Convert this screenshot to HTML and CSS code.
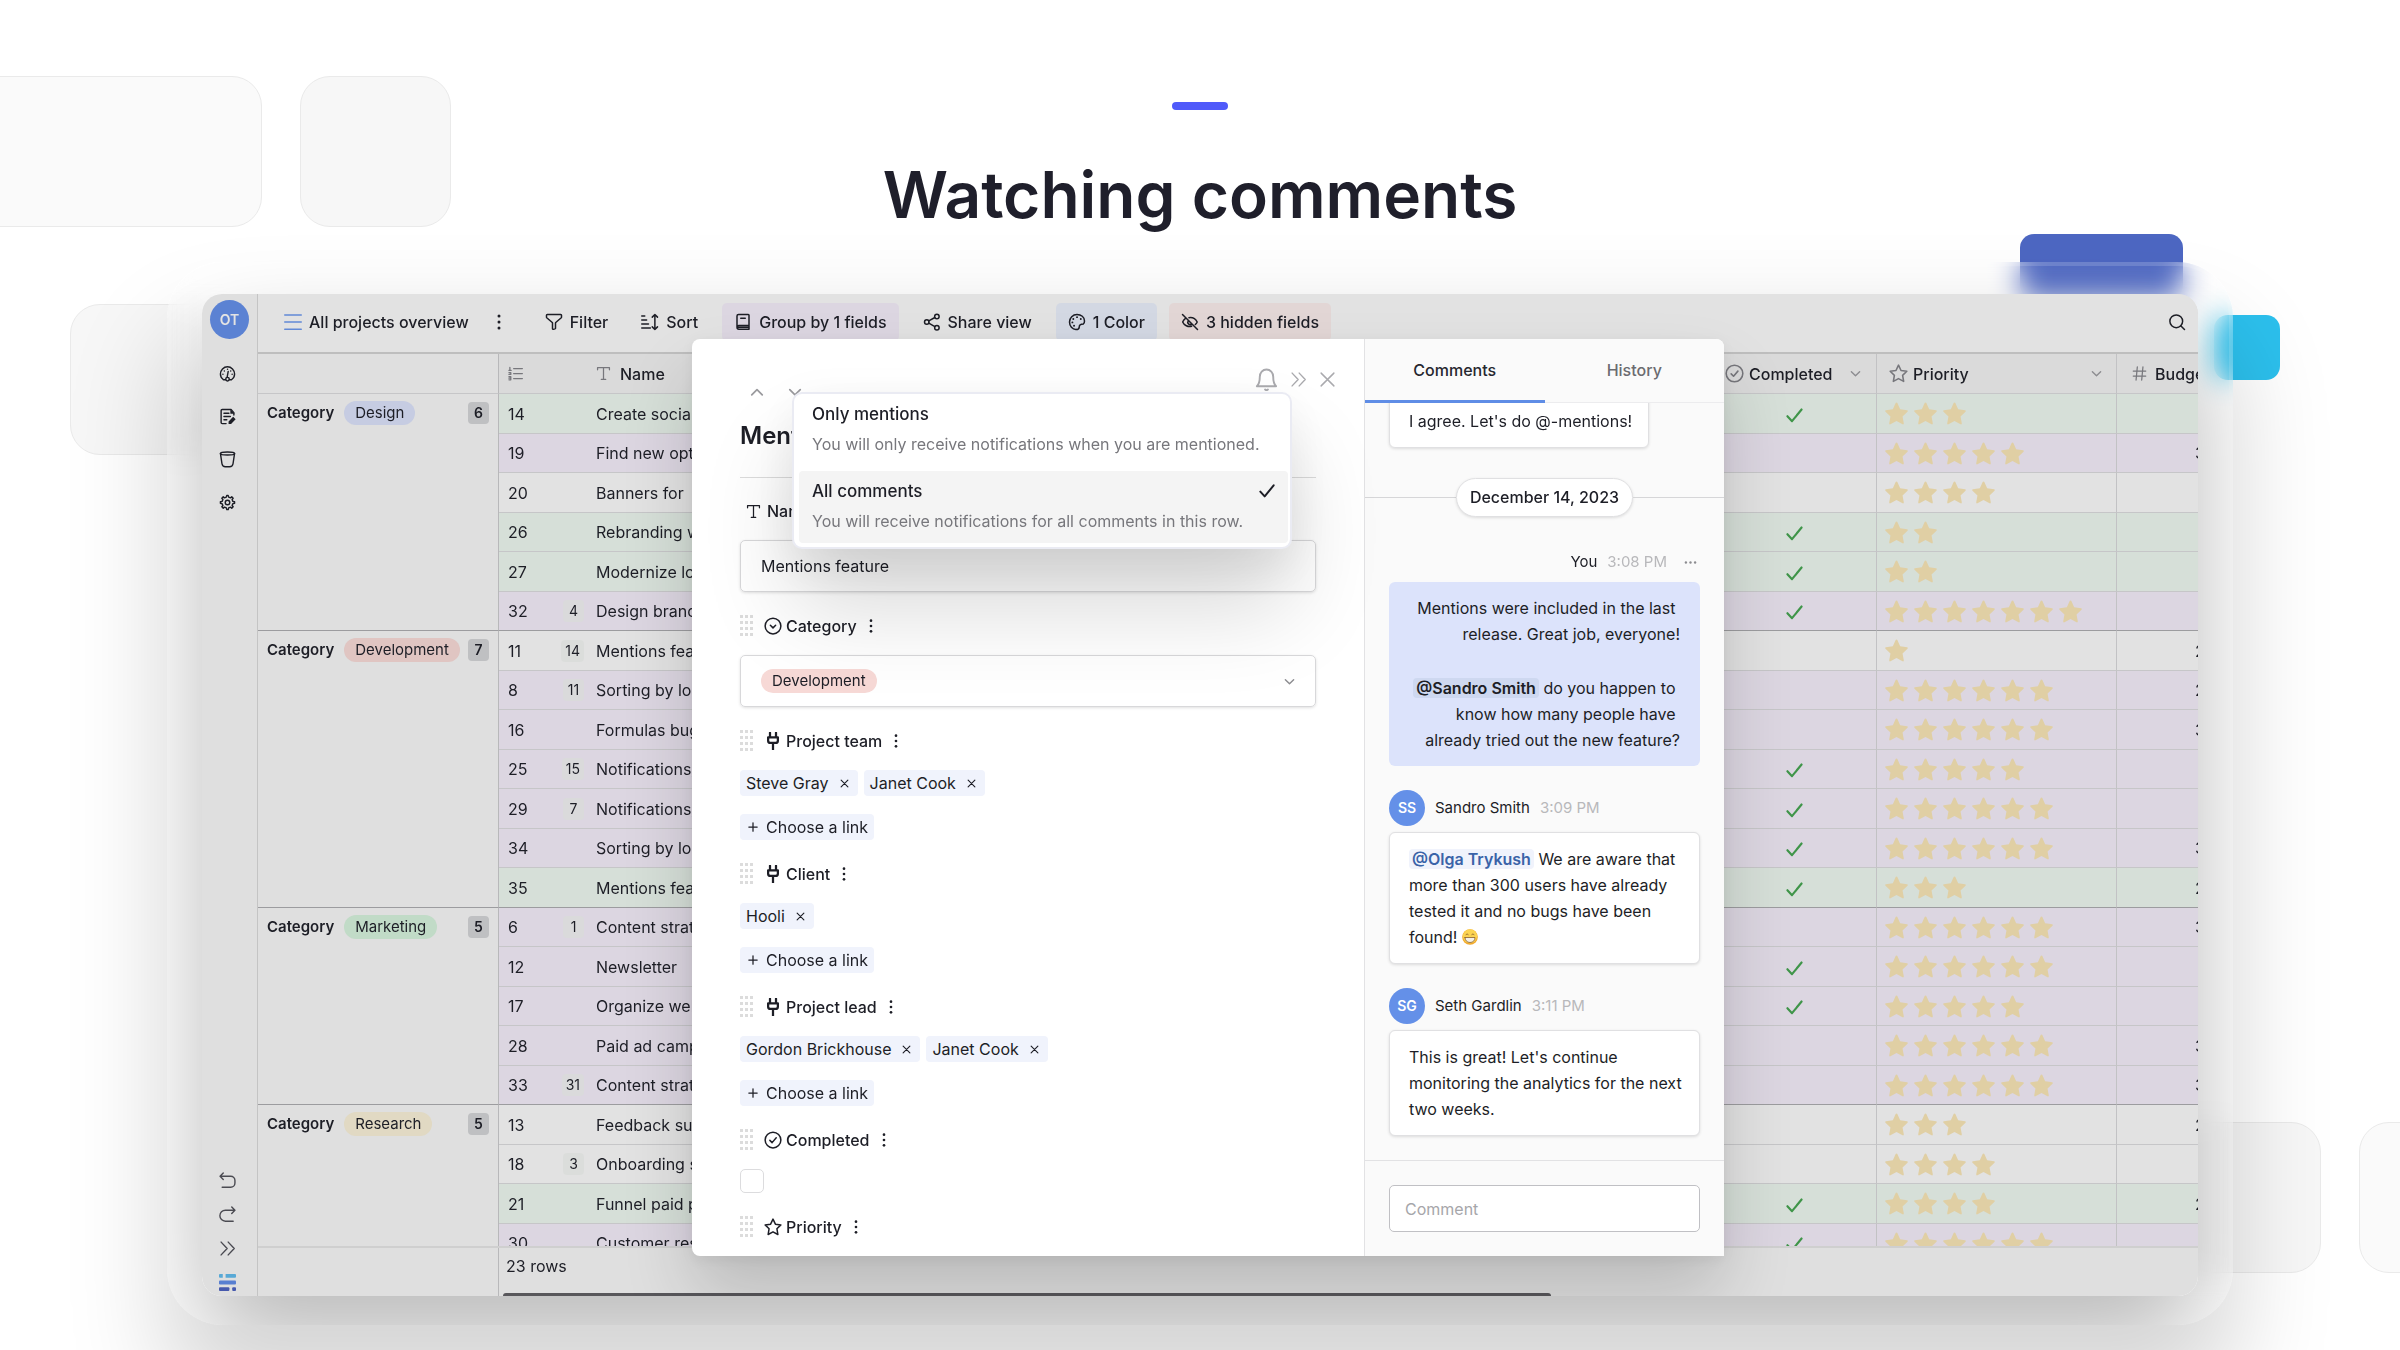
FILE: index.html
```html
<!DOCTYPE html>
<html lang="en">
<head>
	<meta charset="utf-8">
	<title>Watching comments</title>
	<link rel="stylesheet" href="styles.css">
</head>
<body>

<!-- icons -->
<svg class="sprite" aria-hidden="true">
	<symbol id="i-menu" viewBox="0 0 24 24"><path d="M1 2.500h22M1 12h22M1 21.500h22"/></symbol>
	<symbol id="i-kebab" viewBox="0 0 24 24"><g class="solid"><circle cx="12" cy="4" r="2"/><circle cx="12" cy="12" r="2"/><circle cx="12" cy="20" r="2"/></g></symbol>
	<symbol id="i-more" viewBox="0 0 24 24"><g class="solid"><circle cx="3.500" cy="12" r="2.200"/><circle cx="12" cy="12" r="2.200"/><circle cx="20.500" cy="12" r="2.200"/></g></symbol>
	<symbol id="i-filter" viewBox="0 0 24 24"><path d="M3 2h18a1 1 0 0 1 1 1v2.600a1 1 0 0 1-.3.7l-7.400 6.400a1 1 0 0 0-.3.700v6.800a1 1 0 0 1-.7 1l-2.100.6a1 1 0 0 1-1.200-1v-7.400a1 1 0 0 0-.3-.7L2.300 6.300a1 1 0 0 1-.3-.7V3a1 1 0 0 1 1-1z"/></symbol>
	<symbol id="i-sort" viewBox="0 0 24 24"><path d="M1 4h4M1 9.300h6.500M1 14.600h9M1 20h11.500M18.500 2v20M15 5.500 18.500 2 22 5.500M15 18.500l3.500 3.500 3.500-3.500"/></symbol>
	<symbol id="i-book" viewBox="0 0 24 24"><path d="M4 19V4a2 2 0 0 1 2-2h13a1 1 0 0 1 1 1v18.500H6.500a2.500 2.500 0 0 1 0-5H20M9 7h6M4.500 19H20"/></symbol>
	<symbol id="i-share" viewBox="0 0 24 24"><circle cx="18.500" cy="4.500" r="3"/><circle cx="18.500" cy="19.500" r="3"/><circle cx="5" cy="12" r="3"/><path d="M15.800 6 7.700 10.600M7.700 13.500l8.100 4.600"/></symbol>
	<symbol id="i-palette" viewBox="0 0 24 24"><path d="M20.500 14.500c1.200-1 1.500-2.400 1.500-4C22 5.500 17.500 2 12 2S2 6.500 2 12s4 10 8.500 10c3 0 4.500-1.500 4.500-3.500 0-2.500 1-4 5.500-4z"/><path d="M7 8h.1M12 5.500h.1M17 8h.1M5.800 12.500h.1M8 17h.1" stroke-width="2.500"/></symbol>
	<symbol id="i-eye-off" viewBox="0 0 24 24"><path d="M2 2l20 20M10.600 6.200c5-.7 9 1.800 11 5.800-.6 1.300-1.500 2.400-2.500 3.300M6 7.300C4.300 8.500 3 10.200 2.200 12c2 4.500 7 7 12 5.700M9.500 10.500a3.300 3.300 0 0 0 4.500 4.500"/></symbol>
	<symbol id="i-search" viewBox="0 0 24 24"><circle cx="11" cy="11" r="8.500"/><path d="M17 17l5 5"/></symbol>
	<symbol id="i-gauge" viewBox="0 0 24 24"><path d="M6 20.500C3.500 18.800 2 16 2 12.800 2 7.200 6.500 2.500 12 2.500s10 4.700 10 10.300c0 3.200-1.500 6-4 7.700-1.200.7-2.400.3-3.300 0M6 20.500c1.200.7 2.400.3 3.300 0"/><circle cx="12" cy="20" r="2.500"/><path d="M11.500 17l1.500-8M5.500 13h.1M18.500 13h.1M7.500 8.500h.1M16.500 8.500h.1M12 6h.1"/></symbol>
	<symbol id="i-note" viewBox="0 0 24 24"><path d="M21 10V6.500L17 2H4.500A1.500 1.500 0 0 0 3 3.500v17A1.500 1.500 0 0 0 4.500 22H10M7 7.500h7M7 12h9M7 16.500h4"/><path class="solid" d="M13.500 22.500v-3.500l6.500-6.500 3.500 3.500-6.500 6.500zM16 2v6h6z"/></symbol>
	<symbol id="i-bin" viewBox="0 0 24 24"><ellipse cx="12" cy="3.500" rx="10" ry="2.200"/><path d="M2 3.500l2.200 14.500c.4 2.600 2.300 4.300 4.800 4.300h6c2.500 0 4.400-1.700 4.800-4.300L22 3.500"/></symbol>
	<symbol id="i-gear" viewBox="0 0 24 24"><circle cx="12" cy="12" r="3.200"/><path d="M19.600 10.400 18.500 7.700 20 6l-2-2-1.700 1.500-2.700-1.100L12.900 2H11l-.7 2.400-2.600 1.100L6 4 4 6l1.500 1.800-1.100 2.600L2 11v2l2.400.7 1.100 2.600L4 18l2 2 1.800-1.500 2.600 1.100L11 22h2l.6-2.400 2.700-1.100L18 20l2-2-1.500-1.800 1.100-2.600 2.400-.6v-2z"/></symbol>
	<symbol id="i-undo" viewBox="0 0 24 24"><path d="M6 1.500 1.500 6 6 10.500M2 6h14.500a6 6 0 0 1 6 6v3.500a6 6 0 0 1-6 6H4.500"/></symbol>
	<symbol id="i-redo" viewBox="0 0 24 24"><path d="M18 1.500 22.500 6 18 10.500M22 6H9a7.500 7.500 0 0 0 0 15.500h11"/></symbol>
	<symbol id="i-forward" viewBox="0 0 24 24"><path d="M3 3l8.500 9L3 21M13 3l8.500 9-8.500 9"/></symbol>
	<symbol id="i-close" viewBox="0 0 24 24"><path d="M3 3l18 18M21 3 3 21"/></symbol>
	<symbol id="i-up" viewBox="0 0 24 24"><path d="M3 17l9-9 9 9"/></symbol>
	<symbol id="i-down" viewBox="0 0 24 24"><path d="M3 8l9 9 9-9"/></symbol>
	<symbol id="i-bell" viewBox="0 0 24 24"><path d="M19 9c0-4-3-7.500-7-7.500S5 5 5 9c0 7-3 10-3 10h20s-3-3-3-10zM10.500 22.500c.9.700 2.100.7 3 0"/></symbol>
	<symbol id="i-text" viewBox="0 0 24 24"><path d="M2.500 6V2.500h19V6M12 2.500v19M8.500 21.500h7"/></symbol>
	<symbol id="i-ids" viewBox="0 0 24 24"><path d="M9 4h14M9 12h14M9 20h14M3 2v5M1.500 7h3.500M1.500 10.500h3v3h-3M1.500 17h3v5h-3M1.500 19.500h3"/></symbol>
	<symbol id="i-select" viewBox="0 0 24 24"><circle cx="12" cy="12" r="10.500"/><path d="M8.500 11l3.500 3.500 3.500-3.500"/></symbol>
	<symbol id="i-done" viewBox="0 0 24 24"><circle cx="12" cy="12" r="10.500"/><path d="M7.800 12.500l3 3 5.500-6.500"/></symbol>
	<symbol id="i-star" viewBox="0 0 24 24"><path d="M12 1.500l3.200 6.700 7.300 1-5.300 5.100 1.300 7.700L12 18.500 5.500 22l1.300-7.700L1.500 9.200l7.300-1z"/></symbol>
	<symbol id="i-rate" viewBox="0 0 24 24"><path class="solid" d="M12 .5c.4 0 .7.3.9.600l2.900 6.500 7.200.9c.8.100 1.100 1 .5 1.600l-5.200 5 1.300 7.200c.1.800-.6 1.400-1.300 1L12 19.700l-6.300 3.600c-.7.400-1.400-.2-1.300-1l1.300-7.200-5.200-5C-.1 9.500.2 8.600 1 8.500l7.200-.9 2.900-6.500c.2-.3.500-.6.900-.6z"/></symbol>
	<symbol id="i-hash" viewBox="0 0 24 24"><path d="M2 8h20M2 16h20M8.500 1.500l-2 21M17.500 1.500l-2 21"/></symbol>
	<symbol id="i-plug" viewBox="0 0 24 24"><path d="M8 1v6M16 1v6M5.500 7h13v4.500a3 3 0 0 1-3 3h-7a3 3 0 0 1-3-3zM12 14.500V24"/></symbol>
	<symbol id="i-tick" viewBox="0 0 24 24"><path d="M2 13l6.500 7L22 3.500"/></symbol>
	<symbol id="i-plus" viewBox="0 0 24 24"><path d="M12 2v20M2 12h20"/></symbol>
	<symbol id="i-drag" viewBox="0 0 14 22"><path class="solid" d="M0 0h3v3H0zM5 0h3v3H5zM10 0h3v3h-3zM0 6h3v3H0zM5 6h3v3H5zM10 6h3v3h-3zM0 12h3v3H0zM5 12h3v3H5zM10 12h3v3h-3zM0 18h3v3H0zM5 18h3v3H5zM10 18h3v3h-3z"/></symbol>
	<symbol id="i-logo" viewBox="0 0 18 18">
		<g stroke="none"><path fill="#58a9d6" d="M1 0h3v4H1a1 1 0 0 1-1-1V1a1 1 0 0 1 1-1zM7 0h10a1 1 0 0 1 1 1v2a1 1 0 0 1-1 1H7z"/>
		<rect fill="#587fd1" y="7" width="18" height="4" rx="1"/>
		<rect fill="#4659ad" y="14" width="11" height="4" rx="1"/><rect fill="#4659ad" x="14" y="14" width="4" height="4" rx="1"/></g>
	</symbol>
	<symbol id="i-grin" viewBox="0 0 16 16">
		<g stroke="none"><circle cx="8" cy="8" r="7.800" fill="#f2a92c"/><circle cx="8" cy="7.200" r="7" fill="#fcd452"/>
		<path fill="#f4f1ea" d="M3 8.500h10c0 3-2 5-5 5s-5-2-5-5z"/></g>
		<g stroke="#8a5f2c" stroke-width=".8"><path d="M3 8.500h10c0 3-2 5-5 5s-5-2-5-5zM4 5.800c.5-1.300 1.700-1.300 2.200 0M9.800 5.800c.5-1.300 1.700-1.300 2.200 0"/></g>
	</symbol>
</svg>

<!-- background tiles -->
<div class="tile tile-a"></div>
<div class="tile tile-b"></div>
<div class="tile tile-c"></div>
<div class="tile tile-d"></div>
<div class="tile tile-e"></div>
<div class="tile tile-blue"></div>
<div class="tile tile-cyan"></div>

<header class="hero">
	<span class="dash"></span>
	<h1>Watching comments</h1>
</header>

<div class="frame">
	<div class="app">
		<nav class="sidebar">
			<a class="avatar" href="#">OT</a>
			<a class="link" href="#" aria-label="Dashboard"><svg><use href="#i-gauge"/></svg></a>
			<a class="link" href="#" aria-label="Notes"><svg><use href="#i-note"/></svg></a>
			<a class="link" href="#" aria-label="Trash"><svg><use href="#i-bin"/></svg></a>
			<a class="link" href="#" aria-label="Settings"><svg><use href="#i-gear"/></svg></a>
			<div class="bottom">
				<button type="button" aria-label="Undo"><svg><use href="#i-undo"/></svg></button>
				<button type="button" aria-label="Redo"><svg><use href="#i-redo"/></svg></button>
				<button type="button" aria-label="Expand"><svg><use href="#i-forward"/></svg></button>
				<a class="link" href="#" aria-label="Home"><svg><use href="#i-logo"/></svg></a>
			</div>
		</nav>

		<main class="main">
			<div class="toolbar">
				<button type="button" class="view"><svg><use href="#i-menu"/></svg>All projects overview</button>
				<button type="button" class="dots" aria-label="View options"><svg><use href="#i-kebab"/></svg></button>
				<button type="button"><svg><use href="#i-filter"/></svg>Filter</button>
				<button type="button" class="sort"><svg><use href="#i-sort"/></svg>Sort</button>
				<button type="button" class="on purple"><svg><use href="#i-book"/></svg>Group by 1 fields</button>
				<button type="button"><svg><use href="#i-share"/></svg>Share view</button>
				<button type="button" class="on blue"><svg><use href="#i-palette"/></svg>1 Color</button>
				<button type="button" class="on red"><svg><use href="#i-eye-off"/></svg>3 hidden fields</button>
				<button type="button" class="search" aria-label="Search"><svg><use href="#i-search"/></svg></button>
			</div>

			<div class="grid">
				<table>
					<colgroup>
						<col class="c-group"><col class="c-id"><col><col class="c-done"><col class="c-rate"><col class="c-money">
					</colgroup>
					<thead>
						<tr>
							<td class="group"></td>
							<th><div><svg><use href="#i-ids"/></svg></div></th>
							<th class="name"><div><svg><use href="#i-text"/></svg>Name</div></th>
							<th class="done"><div><svg class="big"><use href="#i-done"/></svg>Completed<svg class="arrow"><use href="#i-down"/></svg></div></th>
							<th class="rate"><div><svg class="big"><use href="#i-star"/></svg>Priority<svg class="arrow"><use href="#i-down"/></svg></div></th>
							<th class="money"><div><svg><use href="#i-hash"/></svg>Budget</div></th>
						</tr>
					</thead>
					<tbody id="rows"></tbody>
				</table>
			</div>
			<div class="footer">
				<div class="side"></div>
				<div class="count">23 rows</div>
				<div class="scroll"></div>
			</div>
		</main>

		<div class="overlay">
			<div class="modal" role="dialog" aria-label="Mentions feature">
				<section class="row-form">
					<div class="modal-top">
						<div class="prev-next">
							<button type="button" aria-label="Previous row"><svg><use href="#i-up"/></svg></button>
							<button type="button" aria-label="Next row"><svg><use href="#i-down"/></svg></button>
						</div>
						<div class="actions">
							<button type="button" class="bell" aria-label="Notifications"><svg><use href="#i-bell"/></svg></button>
							<button type="button" aria-label="Collapse"><svg><use href="#i-forward"/></svg></button>
							<button type="button" aria-label="Close"><svg><use href="#i-close"/></svg></button>
						</div>
						<div class="popup">
							<button type="button">
								<strong>Only mentions</strong>
								<span>You will only receive notifications when you are mentioned.</span>
							</button>
							<button type="button" class="active">
								<strong>All comments<svg><use href="#i-tick"/></svg></strong>
								<span>You will receive notifications for all comments in this row.</span>
							</button>
						</div>
					</div>
					<h2>Mentions feature</h2>

					<div class="field">
						<div class="label first"><svg class="small"><use href="#i-text"/></svg><label for="name">Name</label></div>
						<input class="control" id="name" type="text" value="Mentions feature">
					</div>
					<div class="field">
						<div class="label"><svg class="drag"><use href="#i-drag"/></svg><svg><use href="#i-select"/></svg><label for="category">Category</label><svg class="kebab"><use href="#i-kebab"/></svg></div>
						<div class="control">
							<select id="category"><option>Development</option></select>
							<svg class="arrow"><use href="#i-down"/></svg>
						</div>
					</div>
					<div class="field">
						<div class="label"><svg class="drag"><use href="#i-drag"/></svg><svg class="plug"><use href="#i-plug"/></svg>Project team<svg class="kebab"><use href="#i-kebab"/></svg></div>
						<div class="chips">
							<span>Steve Gray<button type="button" aria-label="Remove"><svg><use href="#i-close"/></svg></button></span>
							<span>Janet Cook<button type="button" aria-label="Remove"><svg><use href="#i-close"/></svg></button></span>
						</div>
						<button type="button" class="add"><svg><use href="#i-plus"/></svg>Choose a link</button>
					</div>
					<div class="field">
						<div class="label"><svg class="drag"><use href="#i-drag"/></svg><svg class="plug"><use href="#i-plug"/></svg>Client<svg class="kebab"><use href="#i-kebab"/></svg></div>
						<div class="chips">
							<span>Hooli<button type="button" aria-label="Remove"><svg><use href="#i-close"/></svg></button></span>
						</div>
						<button type="button" class="add"><svg><use href="#i-plus"/></svg>Choose a link</button>
					</div>
					<div class="field">
						<div class="label"><svg class="drag"><use href="#i-drag"/></svg><svg class="plug"><use href="#i-plug"/></svg>Project lead<svg class="kebab"><use href="#i-kebab"/></svg></div>
						<div class="chips">
							<span>Gordon Brickhouse<button type="button" aria-label="Remove"><svg><use href="#i-close"/></svg></button></span>
							<span>Janet Cook<button type="button" aria-label="Remove"><svg><use href="#i-close"/></svg></button></span>
						</div>
						<button type="button" class="add"><svg><use href="#i-plus"/></svg>Choose a link</button>
					</div>
					<div class="field">
						<div class="label"><svg class="drag"><use href="#i-drag"/></svg><svg><use href="#i-done"/></svg><label for="completed">Completed</label><svg class="kebab"><use href="#i-kebab"/></svg></div>
						<input type="checkbox" id="completed">
					</div>
					<div class="field">
						<div class="label"><svg class="drag"><use href="#i-drag"/></svg><svg><use href="#i-star"/></svg>Priority<svg class="kebab"><use href="#i-kebab"/></svg></div>
					</div>
				</section>

				<section class="talk">
					<div class="tabs">
						<button type="button" class="active">Comments</button>
						<button type="button">History</button>
					</div>
					<div class="comments">
						<div class="bubble short">I agree. Let's do @-mentions!</div>
						<div class="date"><span>December 14, 2023</span></div>
						<div class="who mine">You <time>3:08 PM</time><button type="button" aria-label="More"><svg><use href="#i-more"/></svg></button></div>
						<div class="bubble mine">
							<p>Mentions were included in the last release. Great job, everyone!</p>
							<p><b>@Sandro Smith</b> do you happen to know how many people have already tried out the new feature?</p>
						</div>
						<div class="who"><span class="avatar">SS</span>Sandro Smith <time>3:09 PM</time></div>
						<div class="bubble"><b>@Olga Trykush</b> We are aware that more than 300 users have already tested it and no bugs have been found! <svg class="emoji" role="img" aria-label="grin"><use href="#i-grin"/></svg></div>
						<div class="who"><span class="avatar">SG</span>Seth Gardlin <time>3:11 PM</time></div>
						<div class="bubble">This is great! Let's continue monitoring the analytics for the next two weeks.</div>
					</div>
					<div class="write">
						<input type="text" placeholder="Comment" aria-label="Comment">
					</div>
				</section>
			</div>
		</div>
	</div>
</div>

<script type="text/javascript">
	// id, comments, name, color, completed, stars, budget
	var groups = [
		{name: 'Design', count: 6, rows: [
			[14, '', 'Create social', 'green', 1, 3, ''],
			[19, '', 'Find new opt', 'purple', 0, 5, 3],
			[20, '', 'Banners for', '', 0, 4, ''],
			[26, '', 'Rebranding w', 'green', 1, 2, ''],
			[27, '', 'Modernize lo', 'green', 1, 2, ''],
			[32, 4, 'Design brand', 'purple', 1, 7, '']
		]},
		{name: 'Development', count: 7, rows: [
			[11, 14, 'Mentions fea', '', 0, 1, 2],
			[8, 11, 'Sorting by loc', 'purple', 0, 6, 2],
			[16, '', 'Formulas bug', 'purple', 0, 6, 3],
			[25, 15, 'Notifications/', 'purple', 1, 5, ''],
			[29, 7, 'Notifications/', 'purple', 1, 6, ''],
			[34, '', 'Sorting by loc', 'purple', 1, 6, 3],
			[35, '', 'Mentions fea', 'green', 1, 3, 2]
		]},
		{name: 'Marketing', count: 5, rows: [
			[6, 1, 'Content strat', 'purple', 0, 6, 3],
			[12, '', 'Newsletter', 'purple', 1, 6, ''],
			[17, '', 'Organize web', 'purple', 1, 5, ''],
			[28, '', 'Paid ad camp', 'purple', 0, 6, 3],
			[33, 31, 'Content strat', 'purple', 0, 6, 3]
		]},
		{name: 'Research', count: 5, rows: [
			[13, '', 'Feedback sur', '', 0, 3, 2],
			[18, 3, 'Onboarding s', '', 0, 4, ''],
			[21, '', 'Funnel paid p', 'green', 1, 4, 2],
			[30, '', 'Customer res', 'purple', 1, 6, '']
		]}
	];

	function icon(name){
		return '<svg><use href="#i-' + name + '"/></svg>';
	}

	var html = '';
	for (var i=0; i<groups.length; i++) {
		var g = groups[i];
		for (var j=0; j<g.rows.length; j++) {
			var r = g.rows[j];
			html += '<tr class="' + r[3] + (j===g.rows.length-1 ? ' last' : '') + '">';
			if (j===0) {
				html += '<td class="group" rowspan="' + g.rows.length + '"><div><b>Category</b>' +
					'<span class="pill ' + g.name.toLowerCase() + '">' + g.name + '</span><em>' + g.count + '</em></div></td>';
			}
			html += '<td class="id"><div>' + r[0] + (r[1]==='' ? '' : '<i>' + r[1] + '</i>') + '</div></td>' +
				'<td class="name">' + r[2] + '</td>' +
				'<td class="done">' + (r[4] ? icon('tick') : '') + '</td>' +
				'<td class="rate"><div>' + new Array(r[5]+1).join(icon('rate')) + '</div></td>' +
				'<td class="money">' + r[6] + '</td></tr>';
		}
	}
	document.querySelector('#rows').innerHTML = html;
</script>
</body>
</html>
```
FILE: styles.css
```css
*{
	box-sizing: border-box;
}
body, h1, h2, p{
	margin: 0;
}
body{
	position: relative;
	display: flex;
	flex-direction: column;
	height: 100vh;
	padding-bottom: 25px;
	overflow: hidden;
	background: #fff;
	color: #1d1e26;
	font: 16px/20px Inter, sans-serif;
}
button, input, select{
	margin: 0;
	padding: 0;
	border: none;
	outline: none;
	background: none;
	color: inherit;
	font: inherit;
}
a{
	color: inherit;
	text-decoration: none;
}
svg{
	flex: none;
	width: 18px;
	height: 18px;
	fill: none;
	stroke: currentColor;
	stroke-width: 2;
	stroke-linecap: round;
	stroke-linejoin: round;
}
.solid{
	fill: currentColor;
	stroke: none;
}
.sprite{
	position: absolute;
	width: 0;
	height: 0;
}

/* background */
.tile{
	position: absolute;
	width: 151px;
	height: 151px;
	border: 1px solid #eaeaea;
	border-radius: 30px;
	background: #f7f7f7;
}
.tile-a{
	top: 76px;
	left: -40px;
	width: 302px;
	background: #fafafa;
}
.tile-b{
	top: 76px;
	left: 300px;
}
.tile-c{
	top: 304px;
	left: 70px;
}
.tile-d{
	top: 1122px;
	right: 79px;
}
.tile-e{
	top: 1122px;
	right: -110px;
	background: #fafafa;
}
.tile-blue{
	top: 234px;
	right: 217px;
	width: 163px;
	height: 65px;
	border: none;
	border-radius: 14px;
	background: #4d67c2;
}
.tile-cyan{
	top: 315px;
	right: 120px;
	width: 66px;
	height: 65px;
	border: none;
	border-radius: 14px;
	background: #2cc0ed;
}
.hero{
	display: flex;
	flex-direction: column;
	align-items: center;
	height: 262px;
	padding-top: 102px;
}
.dash{
	width: 56px;
	height: 8px;
	border-radius: 4px;
	background: #505afa;
}
.hero h1{
	margin-top: 45px;
	font-size: 64px;
	line-height: 80px;
	font-weight: 600;
	color: #1f1f2b;
}
.frame{
	position: relative;
	flex: 1;
	display: flex;
	min-height: 0;
	margin: 0 167px;
	padding: 32px 35px 29px;
	overflow: hidden;
	border-radius: 56px;
	background: rgba(255, 255, 255, .05);
	box-shadow: 0 70px 100px rgba(0, 0, 0, .17), inset 0 0 0 4px rgba(255, 255, 255, .15);
	backdrop-filter: blur(14px);
}
.app{
	position: relative;
	flex: 1;
	display: flex;
	min-width: 0;
	overflow: hidden;
	border-radius: 20px;
	background: #dfdfdf;
}
/* shadow of the app, the frame clips it */
.frame:before{
	content: "";
	position: absolute;
	top: 32px;
	right: 35px;
	bottom: 29px;
	left: 35px;
	border-radius: 20px;
	box-shadow: 0 50px 100px rgba(0, 0, 0, .27);
}

/* sidebar */
.sidebar{
	display: flex;
	flex-direction: column;
	align-items: center;
	gap: 26px;
	width: 56px;
	padding: 6px 0 5px;
	border-right: 1px solid #c4c4c4;
}
.sidebar a, .sidebar button{
	display: flex;
}
.sidebar .link{
	margin-right: 4px;
}
.sidebar svg{
	width: 17px;
	height: 17px;
}
.avatar{
	flex: none;
	display: flex;
	align-items: center;
	justify-content: center;
	width: 36px;
	height: 36px;
	border-radius: 50%;
	background: #6490e8;
	color: #fff;
	font-size: 14px;
	font-weight: 600;
}
.sidebar .avatar{
	width: 39px;
	height: 39px;
	background: #5b82d3;
	color: #e3e3e3;
}
.bottom{
	display: flex;
	flex-direction: column;
	gap: 17px;
	margin-top: auto;
	color: #4b4b52;
}

/* toolbar */
.main{
	flex: 1;
	display: flex;
	flex-direction: column;
	min-width: 0;
}
.toolbar{
	display: flex;
	align-items: center;
	height: 60px;
	padding: 0 12px 2px;
	border-bottom: 2px solid #bebebe;
	background: #e2e2e2;
	font-weight: 500;
}
.toolbar button{
	display: flex;
	align-items: center;
	gap: 7px;
	height: 38px;
	padding: 0 12px;
	border-radius: 5px;
	white-space: nowrap;
}
.toolbar .on{
	margin: 0 12px;
}
.toolbar .view svg{
	color: #6289d6;
}
.toolbar .view{
	padding: 0 14px;
}
.toolbar .dots{
	margin: 0 13px 0 -5px;
}
.toolbar .sort{
	margin-left: 9px;
}
.toolbar .on.red{
	margin-left: 0;
}
.purple{
	background: #dcd6e1;
}
.toolbar .blue{
	background: #d3d8e3;
}
.toolbar .red{
	background: #e2d6d5;
}
.toolbar .search{
	margin-left: auto;
	padding: 0;
}

/* grid */
.grid{
	flex: 1;
	min-height: 0;
	overflow: hidden;
}
table{
	width: 100%;
	table-layout: fixed;
	border-spacing: 0;
}
.c-group{
	width: 241px;
}
.c-id{
	width: 91px;
}
.c-done{
	width: 165px;
}
.c-rate{
	width: 240px;
}
.c-money{
	width: 81px;
}
th, td{
	height: 39px;
	padding: 0;
	border-bottom: 1px solid #c6c6c8;
	background: #e2e2e2;
	font-weight: 400;
	text-align: left;
	white-space: nowrap;
}
thead td, th, tbody tr:nth-child(odd) td{
	height: 40px;
}
th{
	background: #dadada;
	font-weight: 500;
}
th div{
	display: flex;
	align-items: center;
	gap: 9px;
	padding: 0 9px;
}
th svg{
	width: 15px;
	height: 15px;
	color: #77777c;
}
th .big{
	width: 19px;
	height: 19px;
	margin-right: -4px;
}
th .arrow, .control .arrow{
	width: 11px;
	height: 11px;
	margin-left: auto;
	color: #8c8c90;
	stroke-width: 3;
}
th.done div{
	padding: 0 15px 0 13px;
}
th.rate div{
	padding: 0 14px 0 12px;
}
th.money div{
	padding: 0 0 0 15px;
	gap: 8px;
}
.done, .rate{
	border-right: 1px solid #c2c2c4;
}
.green td{
	background: #d6dfd8;
}
.purple td{
	background: #dcd6e1;
}
.last td, tbody td.group{
	border-bottom: 1px solid #9c9c9f;
}
thead td.group, tbody td.group{
	border-right: 1px solid #b8b8ba;
	background: #dfdfdf;
	vertical-align: top;
}
td.group div{
	display: flex;
	align-items: center;
	height: 38px;
	padding: 0 9px;
}
td.group b{
	font-size: 15px;
	font-weight: 600;
}
.pill{
	margin-left: 10px;
	padding: 0 11px;
	border-radius: 12px;
	font-size: 15px;
	line-height: 24px;
}
.design{
	background: #c6cce2;
}
.development{
	background: #e0c5c2;
}
.marketing{
	background: #c1dbc7;
}
.research{
	background: #e1d9c3;
}
td em, td i{
	min-width: 21px;
	margin-left: auto;
	padding: 0 4px;
	border-radius: 4px;
	background: #bfc0c2;
	font-size: 14px;
	font-style: normal;
	font-weight: 600;
	line-height: 22px;
	text-align: center;
}
td i{
	background: rgba(216, 219, 216, .7);
	font-weight: 400;
}
td.id div{
	display: flex;
	align-items: center;
	padding: 0 6px 0 9px;
}
td.name, th.name div{
	padding-left: 6px;
}
td.done{
	color: #3f9549;
	text-align: center;
}
td.done svg{
	width: 17px;
	height: 17px;
	vertical-align: middle;
	stroke-width: 3;
}
td.rate div{
	display: flex;
	gap: 6px;
	padding-left: 8px;
	color: #e0cfa4;
}
td.rate svg{
	width: 23px;
	height: 23px;
}
td.money{
	padding-left: 78px;
	overflow: hidden;
}
.footer{
	display: flex;
	position: relative;
	height: 50px;
	border-top: 2px solid #cfcfcf;
}
.footer .side{
	width: 241px;
	border-right: 1px solid #b8b8ba;
}
.footer .count{
	padding: 8px 7px;
}
.scroll{
	position: absolute;
	bottom: 0;
	left: 245px;
	width: 54%;
	height: 3px;
	border-radius: 3px 3px 0 0;
	background: #58575b;
}

/* row modal */
.overlay{
	position: absolute;
	top: 0;
	right: 0;
	bottom: 0;
	left: 0;
	padding: 45px 474px 40px 490px;
}
.modal{
	display: flex;
	height: 100%;
	border-radius: 8px;
	background: #fff;
	box-shadow: 0 40px 70px rgba(0, 0, 0, .16), 0 4px 14px rgba(0, 0, 0, .06);
}
.row-form{
	flex: 1;
	min-width: 0;
	padding: 0 48px;
}
.modal-top{
	position: relative;
	display: flex;
	justify-content: space-between;
	height: 80px;
	margin-right: -20px;
	color: #9a9a9e;
}
.modal-top button{
	display: flex;
}
.prev-next{
	display: flex;
	gap: 24px;
	padding: 46px 0 0 10px;
}
.prev-next svg{
	width: 14px;
	height: 14px;
	stroke-width: 3;
}
.actions{
	display: flex;
	align-items: center;
	gap: 12px;
	height: 80px;
	color: #aaaaae;
}
.actions svg{
	width: 17px;
	height: 17px;
}
.actions .bell svg{
	width: 23px;
	height: 23px;
}
.popup{
	position: absolute;
	top: 53px;
	right: 44px;
	width: 500px;
	padding: 0 2px 4px 5px;
	border: 2px solid #eaebf3;
	border-radius: 10px;
	background: #fff;
	color: #1d1e26;
	box-shadow: 0 60px 90px rgba(0, 0, 0, .15), 0 16px 50px rgba(0, 0, 0, .08);
}
.modal-top .popup button{
	display: block;
	width: 100%;
	height: 72px;
	padding: 3px 13px 6px;
	border-radius: 4px;
	text-align: left;
}
.popup .active{
	margin-top: 5px;
	background: #f4f4f4;
}
.popup strong{
	display: flex;
	justify-content: space-between;
	font-size: 17px;
	font-weight: 500;
}
.popup strong svg{
	width: 16px;
	height: 20px;
	stroke-width: 3;
}
.popup span{
	display: block;
	margin-top: 10px;
	color: #77777c;
}
h2{
	padding: 4px 0 28px;
	border-bottom: 1px solid #dcdcdc;
	font-size: 24px;
	line-height: 26px;
	font-weight: 600;
}
.row-form .field:nth-of-type(2){
	margin-top: 23px;
}
.field{
	margin-bottom: 24px;
}
.label{
	display: flex;
	align-items: center;
	height: 20px;
	gap: 4px;
	margin-bottom: 19px;
	font-weight: 500;
}
.label.first{
	gap: 6px;
	padding-left: 6px;
}
.label .small{
	width: 15px;
	height: 15px;
}
.label .plug{
	width: 18px;
	height: 18px;
	stroke-width: 3;
}
.label .drag{
	width: 14px;
	height: 22px;
	margin-right: 6px;
	color: #dcdcdc;
}
.label .kebab{
	width: 16px;
	height: 16px;
	margin-left: 2px;
}
.control{
	display: flex;
	align-items: center;
	width: 100%;
	height: 52px;
	padding: 0 20px;
	border: 1px solid #d8d8da;
	border-radius: 5px;
	box-shadow: 0 1px 3px rgba(0, 0, 0, .12);
}
.control select{
	padding: 0 11px;
	border-radius: 12px;
	background: #f7d9d6;
	font-size: 15px;
	line-height: 24px;
	appearance: none;
}
.chips{
	display: flex;
	gap: 6px;
	margin-bottom: 18px;
}
.chips span, .add{
	display: flex;
	align-items: center;
	height: 26px;
	padding: 0 6px;
	border-radius: 4px;
	background: #f0f3fc;
}
.chips button{
	display: flex;
	margin: 0 3px 0 11px;
}
.chips svg{
	width: 9px;
	height: 9px;
	stroke-width: 3;
}
.add svg{
	width: 10px;
	height: 10px;
	margin: 0 8px 0 2px;
	stroke-width: 3;
}
input[type=checkbox]{
	display: block;
	width: 24px;
	height: 24px;
	border: 1px solid #dcdcde;
	border-radius: 5px;
	appearance: none;
}

/* comments */
.talk{
	flex: none;
	display: flex;
	flex-direction: column;
	width: 360px;
	border-left: 1px solid #e2e2e4;
	border-radius: 0 8px 0 0;
	background: #fafafa;
}
.tabs{
	display: flex;
	border-bottom: 1px solid #ececee;
}
.tabs button{
	flex: 1;
	height: 64px;
	margin-bottom: -1px;
	border-bottom: 3px solid transparent;
	color: #6b6b70;
	font-weight: 500;
}
.tabs .active{
	border-color: #5f8de6;
	color: #26272f;
}
.comments{
	flex: 1;
	display: flex;
	flex-direction: column;
	justify-content: flex-end;
	min-height: 0;
	padding: 0 24px 24px;
	overflow: hidden;
}
.bubble{
	flex: none;
	padding: 13px 16px 13px 19px;
	border: 1px solid #e0e0e2;
	border-radius: 6px;
	background: #fff;
	box-shadow: 0 1px 3px rgba(0, 0, 0, .12);
	line-height: 26px;
}
.bubble.short{
	align-self: flex-start;
}
.bubble.mine{
	padding: 13px 20px;
	border: none;
	background: #dce3fb;
	box-shadow: none;
	text-align: right;
}
.bubble.mine p{
	/* keeps the space at the end of a wrapped line */
	white-space: break-spaces;
}
.bubble.mine p + p{
	margin-top: 28px;
}
.bubble b{
	padding: 0 3px;
	border-radius: 4px;
	background: #f0f3fc;
	color: #3a63a8;
	font-weight: 600;
}
.bubble.mine b{
	background: #ced8f0;
	color: #1d1e26;
}
.emoji{
	width: 16px;
	height: 16px;
	vertical-align: -2px;
}
.date{
	display: flex;
	align-items: center;
	margin: 30px -24px 35px;
}
.date:before, .date:after{
	content: "";
	flex: 1;
	height: 1px;
	background: #d6d6d8;
}
.date span{
	padding: 0 13px;
	border: 1px solid #e0e0e2;
	border-radius: 20px;
	background: #fff;
	box-shadow: 0 1px 3px rgba(0, 0, 0, .12);
	font-weight: 500;
	line-height: 37px;
}
.who{
	display: flex;
	align-items: center;
	gap: 10px;
	margin: 24px 0 6px;
	font-size: 15px;
}
.who time{
	color: #b8b8bb;
}
.who.mine{
	justify-content: flex-end;
	margin: 0 3px 10px 0;
}
.who button{
	display: flex;
	margin-left: 7px;
	color: #8c8c90;
}
.who button svg{
	width: 13px;
	height: 13px;
}
.write{
	padding: 24px;
	border-top: 1px solid #e2e2e4;
}
.write input{
	display: block;
	width: 100%;
	height: 47px;
	padding: 0 15px;
	border: 1px solid #c0c0c4;
	border-radius: 5px;
	background: #fff;
}
.write input::placeholder{
	color: #a6a6aa;
}
```
